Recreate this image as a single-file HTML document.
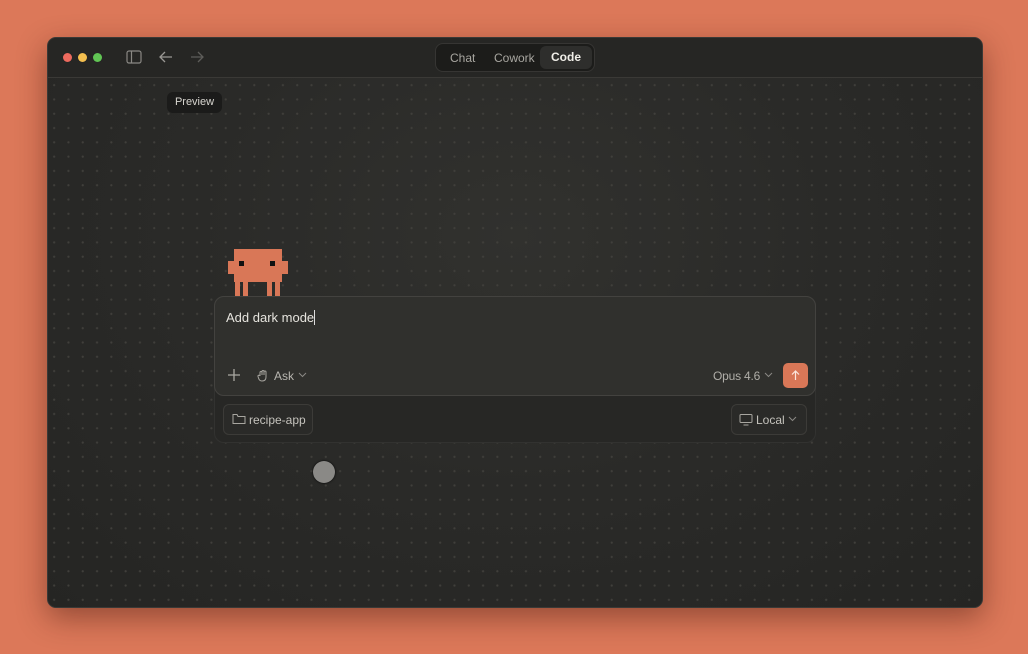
<!DOCTYPE html>
<html><head><meta charset="utf-8"><style>
*{margin:0;padding:0;box-sizing:border-box}
body{width:1028px;height:654px;background:#dc7859;font-family:"Liberation Sans",sans-serif;position:relative;overflow:hidden}
.win{position:absolute;left:47px;top:37px;width:936px;height:571px;background:#2a2a28;border-radius:9px;overflow:hidden;box-shadow:0 10px 30px rgba(60,20,10,.45);border:1px solid #3a3936}
.tb{position:absolute;left:0;top:0;right:0;height:40px;background:#262624;border-bottom:1px solid #3a3936}
.main{position:absolute;left:0;top:40px;right:0;bottom:0;background:radial-gradient(ellipse at 50% 30%,#31312e 0%,#2a2a28 50%,#252523 100%)}
.dots{position:absolute;inset:0;background-image:radial-gradient(circle,#403f3b 0.9px,transparent 1.3px);background-size:14.3px 14.3px;background-position:-1px 0px}
.tl{position:absolute;top:15px;width:9px;height:9px;border-radius:50%}
.seg{position:absolute;left:387px;top:5px;width:160px;height:29px;background:#1c1c1a;border:1px solid #363533;border-radius:8px;font-size:12px}
.seg span{position:absolute;top:7px;font-size:12px;color:#a8a6a0}
.seg .on{position:absolute;left:104px;top:2px;width:52px;height:23px;background:#2e2e2c;border-radius:6px;color:#f0eee8;font-weight:bold;text-align:center;line-height:23px;font-size:12px}
.tip{position:absolute;left:119px;top:54px;width:55px;height:21px;background:#1b1b1a;border-radius:6px;color:#d8d6d0;font-size:11px;text-align:center;line-height:21px}
.px{position:absolute;background:#d97757}
.tray{position:absolute;left:166px;top:258px;width:602px;height:147px;background:#272725;border:1px solid #323230;border-radius:10px}
.inp{position:absolute;left:166px;top:258px;width:602px;height:100px;background:#30302d;border:1px solid #43423f;border-radius:10px}
.t{position:absolute;color:#d0cec8;font-size:12px}
.btn{position:absolute;border:1px solid #3c3b38;border-radius:6px;background:#2a2a28}
</style></head><body>
<div class="win">
 <div class="tb">
  <div class="tl" style="left:15px;background:#ed6a5e"></div>
  <div class="tl" style="left:30px;background:#f4bf4f"></div>
  <div class="tl" style="left:45px;background:#61c554"></div>
  <svg style="position:absolute;left:78px;top:12px" width="16" height="14" viewBox="0 0 16 14"><rect x="1" y="1" width="14" height="12" rx="2" fill="none" stroke="#8a8884" stroke-width="1.2"/><line x1="5.5" y1="1" x2="5.5" y2="13" stroke="#8a8884" stroke-width="1.2"/></svg>
  <svg style="position:absolute;left:110px;top:12px" width="16" height="14" viewBox="0 0 16 14"><path d="M14 7H2M7 2L2 7l5 5" fill="none" stroke="#9a9894" stroke-width="1.3"/></svg>
  <svg style="position:absolute;left:141px;top:12px" width="16" height="14" viewBox="0 0 16 14"><path d="M2 7h12M9 2l5 5-5 5" fill="none" stroke="#5e5d5a" stroke-width="1.3"/></svg>
  <div class="seg"><span style="left:14px">Chat</span><span style="left:58px">Cowork</span><div class="on">Code</div></div>
 </div>
 <div class="main"><div class="dots"></div></div>
 <div class="tip">Preview</div>
 <div class="px" style="left:186px;top:211px;width:48px;height:33px"></div>
 <div class="px" style="left:180px;top:223px;width:60px;height:13px"></div>
 <div class="px" style="left:187px;top:243px;width:5px;height:15px"></div>
 <div class="px" style="left:195px;top:243px;width:5px;height:15px"></div>
 <div class="px" style="left:219px;top:243px;width:5px;height:15px"></div>
 <div class="px" style="left:227px;top:243px;width:5px;height:15px"></div>
 <div style="position:absolute;left:191px;top:223px;width:5px;height:5px;background:#111"></div>
 <div style="position:absolute;left:222px;top:223px;width:5px;height:5px;background:#111"></div>
 <div class="tray"></div>
 <div class="inp"></div>
 <div class="t" style="left:178px;top:272px;font-size:13px;color:#e6e4de">Add dark mode<span style="display:inline-block;width:1px;height:15px;background:#ddd;vertical-align:-3px"></span></div>
 <svg style="position:absolute;left:179px;top:330px" width="14" height="14"><path d="M7 1v12M1 7h12" stroke="#aaa8a2" stroke-width="1.3"/></svg>
 <svg style="position:absolute;left:209px;top:331px" width="12" height="13" viewBox="0 0 12 13"><path d="M3 7V3.5a1 1 0 0 1 2 0V6M5 6V2.5a1 1 0 0 1 2 0V6M7 6V3a1 1 0 0 1 2 0v5c0 3-2 4-4 4S2 11 1.5 9L1 7.5a1 1 0 0 1 2-.5" fill="none" stroke="#a8a6a0" stroke-width="1"/></svg>
 <div class="t" style="left:226px;top:331px;color:#b8b6b0">Ask</div>
 <svg style="position:absolute;left:250px;top:334px" width="9" height="6"><path d="M1 1l3.5 3.5L8 1" fill="none" stroke="#8a8884" stroke-width="1"/></svg>
 <div class="t" style="left:665px;top:331px;color:#b0aea8;letter-spacing:-0.2px">Opus 4.6</div>
 <svg style="position:absolute;left:716px;top:334px" width="9" height="6"><path d="M1 1l3.5 3.5L8 1" fill="none" stroke="#8a8884" stroke-width="1"/></svg>
 <div style="position:absolute;left:735px;top:325px;width:25px;height:25px;background:#d97757;border-radius:5px"></div>
 <svg style="position:absolute;left:741px;top:331px" width="13" height="13"><path d="M6.5 11V2M3 5.5l3.5-3.5L10 5.5" fill="none" stroke="#fbe6dd" stroke-width="1.2"/></svg>
 <div class="btn" style="left:175px;top:366px;width:90px;height:31px"></div>
 <svg style="position:absolute;left:184px;top:375px" width="14" height="12"><path d="M1 2.5V10.5h12V3.5H6L5 1.5H1z" fill="none" stroke="#a8a6a0" stroke-width="1"/></svg>
 <div class="t" style="left:201px;top:375px;color:#c4c2bc">recipe-app</div>
 <div class="btn" style="left:683px;top:366px;width:76px;height:31px"></div>
 <svg style="position:absolute;left:691px;top:375px" width="14" height="13"><rect x="1" y="1.5" width="12" height="8" rx="1" fill="none" stroke="#a8a6a0" stroke-width="1"/><path d="M4.5 12h5" stroke="#a8a6a0"/></svg>
 <div class="t" style="left:708px;top:375px;color:#c4c2bc">Local</div>
 <svg style="position:absolute;left:740px;top:378px" width="9" height="6"><path d="M1 1l3.5 3.5L8 1" fill="none" stroke="#8a8884" stroke-width="1"/></svg>
 <div style="position:absolute;left:265px;top:423px;width:22px;height:22px;border-radius:50%;background:#8a8986;box-shadow:0 0 2px #000"></div>
</div>
</body></html>
